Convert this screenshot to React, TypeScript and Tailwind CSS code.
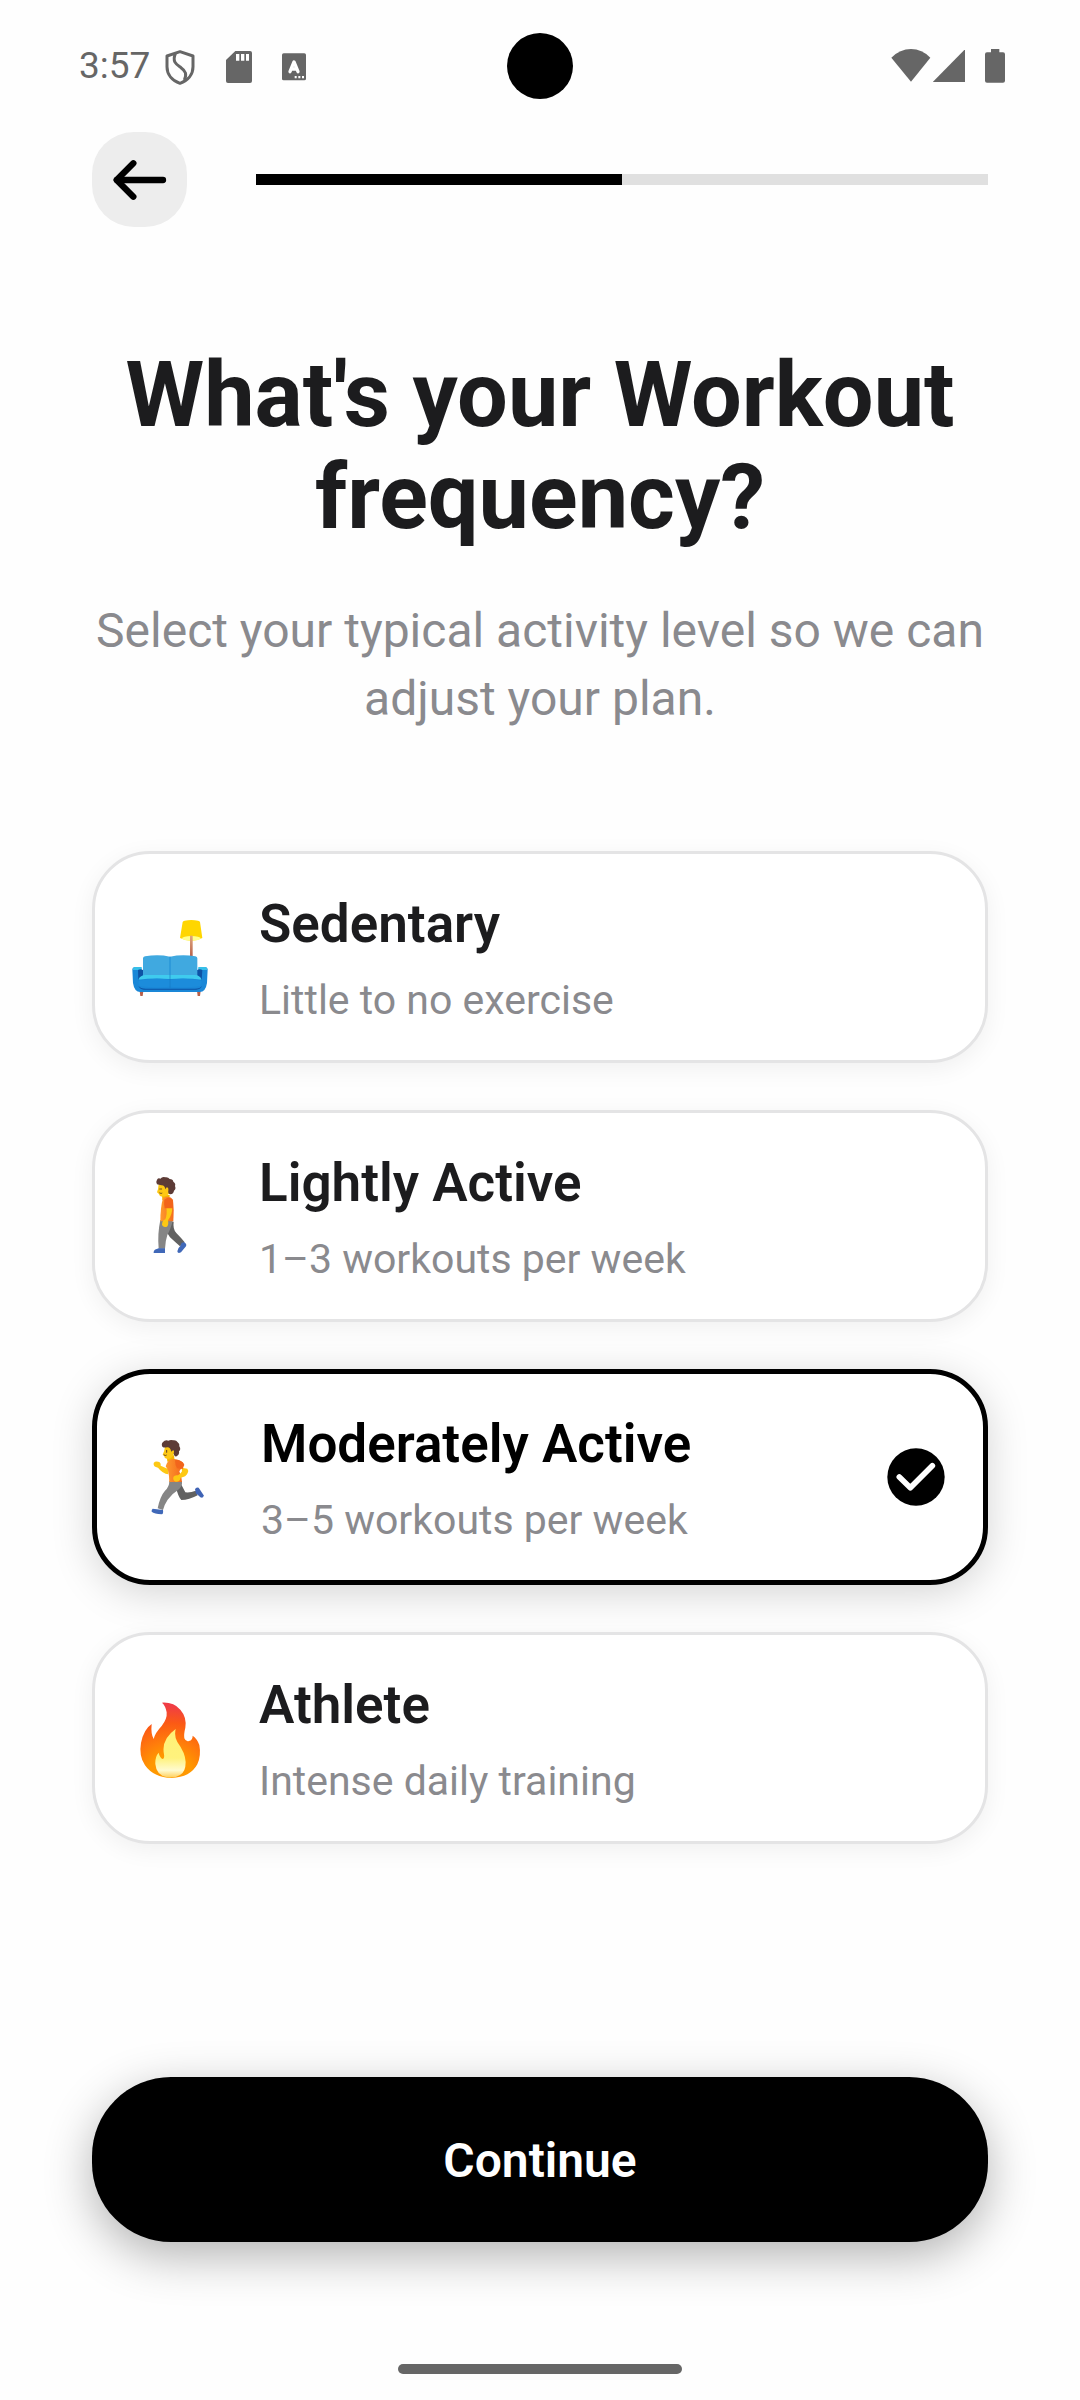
import { useState } from "react";
import type { ReactNode } from "react";

function ShieldIcon() {
  return (
    <svg className="h-11 w-8" viewBox="313 72 96 132" fill="none" stroke="#666" strokeWidth="9" strokeLinejoin="round" aria-hidden="true">
      <path d="M361 95 L400 108 V140 C400 164 384 182 361 190 C338 182 322 164 322 140 V108 Z" />
      <path d="M347 101 C337 126 350 133 364 143 C378 153 382 162 374 180" />
    </svg>
  );
}

function SdCardIcon() {
  return (
    <svg className="h-11 w-7" viewBox="492 72 84 132" aria-hidden="true">
      <path fill="#666" d="M523 93 H567 Q573 93 573 99 V183 Q573 189 567 189 H501 Q495 189 495 183 V120 Z" />
      <path fill="#fff" d="M525 102h10v20h-10zM540 102h10v20h-10zM555 102h9v20h-9z" />
    </svg>
  );
}

function LetterBoxIcon() {
  return (
    <svg className="h-11 w-6" viewBox="672 72 72 132" aria-hidden="true">
      <rect x="672" y="100" width="72" height="81" rx="5" fill="#666" />
      <path d="M696 155 L708 126 L720 155 M701 147 H715" fill="none" stroke="#fff" strokeWidth="10" strokeLinecap="round" strokeLinejoin="round" />
      <path fill="#fff" d="M710 168h6v7h-6zM721 168h6v7h-6zM732 168h6v7h-6z" />
    </svg>
  );
}

function WifiIcon() {
  return (
    <svg className="h-11 w-10" viewBox="92 72 120 132" aria-hidden="true">
      <path fill="#666" d="M93 113 Q119 87 152 87 Q185 87 210 113 L152 185 Z" />
    </svg>
  );
}

function SignalIcon() {
  return (
    <svg className="h-11 w-8" viewBox="221 72 96 132" aria-hidden="true">
      <path fill="#666" d="M318 87 V186 H220 Z" />
    </svg>
  );
}

function BatteryIcon() {
  return (
    <svg className="h-11 w-5" viewBox="375 72 60 132" aria-hidden="true">
      <path fill="#666" d="M393 87 H418 V97 H429 Q435 97 435 103 V182 Q435 188 429 188 H381 Q375 188 375 182 V103 Q375 97 381 97 H393 Z" />
    </svg>
  );
}

function CouchIcon() {
  return (
    <svg className="size-20 shrink-0" viewBox="48 48 240 240" aria-hidden="true">
      <defs>
        <linearGradient id="pole" x1="0" x2="0" y1="0" y2="1">
          <stop offset="0" stopColor="#dfa77e" />
          <stop offset="1" stopColor="#b8604a" />
        </linearGradient>
      </defs>
      <path d="M203 63 Q204 60 209 59 Q229 55 249 59 Q254 60 255 63 L262 111 Q229 128 195 111 Z" fill="#ffd600" />
      <ellipse cx="229" cy="112" rx="28" ry="7" fill="#ffff8d" />
      <rect x="225" y="104" width="8" height="64" fill="url(#pole)" />
      <path d="M74 270 h11 l-2 15 h-7 z M246 270 h11 l-2 15 h-7 z" fill="#b8604a" />
      <path d="M52 205 Q52 199 59 199 H78 L84 226 H246 L252 199 H271 Q278 199 278 205 L276 246 Q272 273 254 273 H76 Q58 273 54 246 Z" fill="#1a87d7" />
      <path d="M58 198 H80 V207 H54 Q53 200 58 198 M250 198 H272 Q278 200 276 207 H250 Z" fill="#37bfe9" />
      <path d="M69 207 Q76 203 84 207 V228 L70 238 Z M246 207 Q255 203 262 207 L260 238 L246 228 Z" fill="#0d52a5" />
      <path d="M84 172 Q84 167 90 166 Q130 159 165 167 Q202 159 241 166 Q247 167 247 172 V226 H84 Z" fill="#40a9e0" />
      <path d="M165 167 V226" stroke="#1c8cd4" strokeWidth="3" />
      <path d="M70 236 Q76 222 92 222 H240 Q254 222 260 236 Q215 230 165 234 Q114 230 70 236 Z" fill="#3fcbee" />
      <path d="M70 254 Q76 263 92 263 H240 Q256 263 261 254 Q258 264 244 266 H86 Q74 264 70 254 Z" fill="#0d52a5" />
      <path d="M71 239 Q118 230 165 236 Q214 230 259 239 Q262 250 254 256 Q210 262 165 257 Q118 262 76 256 Q68 250 71 239 Z" fill="#1c8cdb" />
      <path d="M165 222 V261" stroke="#1578c4" strokeWidth="2" />
    </svg>
  );
}

function WalkerIcon() {
  return (
    <svg className="size-20 shrink-0" viewBox="48 48 240 240" aria-hidden="true">
      <defs>
        <linearGradient id="walkShirt" x1="0" x2="1" y1="0" y2="0">
          <stop offset="0" stopColor="#ff9a2e" />
          <stop offset="1" stopColor="#f36c1c" />
        </linearGradient>
      </defs>
      <path d="M155 185 H176 Q173 207 184 219 Q198 233 209 247 L195 259 Q178 244 165 232 Q151 215 155 185 Z" fill="#616161" />
      <path d="M200 248 L208 247 Q216 252 213 259 L198 277 Q188 282 187 274 Q188 264 196 258 Z" fill="#4068b8" />
      <path d="M136 180 H174 Q166 210 157 225 Q151 243 150 266 H131 Q127 222 136 180 Z" fill="#858585" />
      <path d="M131 265 H150 V279 H116 Q115 271 123 268 Z" fill="#4068b8" />
      <path d="M141 105 H164 L163 120 H142 Z" fill="#f5b400" />
      <path d="M144 114 Q164 105 174 119 Q178 150 175 184 H136 Q136 142 144 114 Z" fill="url(#walkShirt)" />
      <path d="M154 141 H172 Q172 165 159 181 Q162 198 154 201 Q143 201 141 194 Q141 182 151 178 Q157 162 154 141 Z" fill="#fdc813" />
      <path d="M148 119 Q168 105 174 127 V145 H149 Q146 130 148 119 Z" fill="#f2641b" />
      <path d="M131 72 Q163 67 166 86 Q164 105 151 109 Q133 112 132 102 L126 97 Q130 88 131 72 Z" fill="#fdc813" />
      <path d="M126 73 Q121 67 126 59 Q130 53 136 56 Q142 49 151 52 Q160 51 164 57 Q174 57 175 65 Q183 70 180 78 Q184 87 177 92 Q176 101 166 103 Q158 101 160 92 Q161 82 155 82 L151 88 Q149 75 139 76 Z" fill="#5d3b36" />
      <path d="M134 87 h6 M134 99 q5 3 7 1" stroke="#79551c" strokeWidth="3" fill="none" strokeLinecap="round" />
    </svg>
  );
}

function RunnerIcon() {
  return (
    <svg className="size-20 shrink-0" viewBox="48 48 240 240" aria-hidden="true">
      <defs>
        <linearGradient id="runShirt" x1="0" x2="1" y1="0" y2="0">
          <stop offset="0" stopColor="#ff9a2e" />
          <stop offset="1" stopColor="#f2651c" />
        </linearGradient>
      </defs>
      <path d="M176 196 L190 185 L205 214 Q220 216 236 209 L242 223 Q216 237 193 237 Q184 230 176 196 Z" fill="#616161" />
      <path d="M234 205 Q237 197 245 200 L260 223 Q260 233 250 229 L237 217 Z" fill="#3f63b5" />
      <path d="M157 180 H195 Q197 196 183 207 Q164 219 152 236 Q143 249 138 267 L122 262 Q129 226 144 209 Q157 198 157 180 Z" fill="#858585" />
      <path d="M107 263 L138 267 Q140 279 134 280 Q112 278 104 272 Q103 266 107 263 Z" fill="#4068b8" />
      <path d="M110 126 Q115 119 127 123 Q133 128 131 134 L155 145 L154 160 Q137 158 123 140 Q108 138 110 126 Z" fill="#fdc813" />
      <path d="M149 103 H171 L173 119 L151 122 Z" fill="#f5b400" />
      <path d="M153 147 Q148 139 146 136 Q151 116 168 114 Q187 115 197 124 L201 130 L187 151 Q194 167 195 183 H157 Q157 165 153 147 Z" fill="url(#runShirt)" />
      <path d="M194 140 L211 143 Q216 149 212 156 Q207 168 191 170 Q189 183 176 182 Q167 179 169 168 Q173 161 183 163 Q192 158 195 151 Z" fill="#fdc813" />
      <path d="M174 118 Q190 114 202 131 L197 144 L180 142 Q174 132 174 118 Z" fill="#f2651c" />
      <path d="M144 77 Q169 70 173 91 Q168 112 155 114 Q142 114 142 106 L137 101 Q142 93 144 77 Z" fill="#fdc813" />
      <path d="M136 77 Q132 68 138 63 Q144 56 154 59 Q161 55 169 58 Q178 57 182 64 Q190 70 187 76 Q193 85 186 91 Q188 101 179 106 Q171 108 170 97 Q173 88 168 88 L163 92 Q159 77 150 79 Q141 81 136 77 Z" fill="#5d3b36" />
      <path d="M149 88 v6 M141 102 q5 3 7 1" stroke="#63431f" strokeWidth="3" fill="none" strokeLinecap="round" />
    </svg>
  );
}

function FlameIcon() {
  return (
    <svg className="size-20 shrink-0" viewBox="48 48 240 240" aria-hidden="true">
      <defs>
        <radialGradient id="flameOuter" gradientUnits="userSpaceOnUse" cx="166" cy="286" r="226">
          <stop offset="0.3" stopColor="#ff9800" />
          <stop offset="0.5" stopColor="#ff7a0c" />
          <stop offset="0.72" stopColor="#fb5a14" />
          <stop offset="0.95" stopColor="#f03d45" />
        </radialGradient>
        <linearGradient id="flameInner" x1="0" x2="0" y1="0" y2="1">
          <stop offset="0" stopColor="#fff176" />
          <stop offset="0.6" stopColor="#fff27d" />
          <stop offset="0.85" stopColor="#fffbd0" />
          <stop offset="1" stopColor="#ffcf5c" />
        </linearGradient>
      </defs>
      <path d="M141 62 Q176 60 196 83 Q216 106 211 137 Q206 157 208 169 Q212 180 222 177 Q233 174 233 161 Q247 171 253 189 Q259 221 247 247 Q226 286 170 288 Q116 287 90 250 Q71 222 78 183 Q86 142 110 126 Q107 155 116 171 Q120 153 140 132 Q157 111 155 91 Q152 72 141 62 Z" fill="url(#flameOuter)" />
      <path d="M182 141 Q177 163 187 180 Q211 213 212 240 Q212 270 195 279 Q180 289 156 286 Q124 280 121 246 Q120 224 131 212 Q134 227 143 231 Q149 230 147 217 Q138 172 182 141 Z" fill="url(#flameInner)" />
    </svg>
  );
}

function CheckBadge() {
  return (
    <svg className="mr-0.5 size-[58px] shrink-0" viewBox="263 292 174 174" aria-hidden="true">
      <circle cx="350" cy="379" r="86" fill="#000" />
      <path d="M300 379 L333 411 L399 345" fill="none" stroke="#fff" strokeWidth="17" strokeLinecap="round" strokeLinejoin="round" />
    </svg>
  );
}

type Level = { id: string; title: string; detail: string; icon: ReactNode };

const levels: Level[] = [
  { id: "sedentary", title: "Sedentary", detail: "Little to no exercise", icon: <CouchIcon /> },
  { id: "light", title: "Lightly Active", detail: "1–3 workouts per week", icon: <WalkerIcon /> },
  { id: "moderate", title: "Moderately Active", detail: "3–5 workouts per week", icon: <RunnerIcon /> },
  { id: "athlete", title: "Athlete", detail: "Intense daily training", icon: <FlameIcon /> },
];

function StatusBar() {
  return (
    <header className="relative flex h-[132px] items-center justify-between pr-[75px] pl-[79px]">
      <div className="flex items-center">
        <span className="text-[37px] leading-11 text-[#666]">3:57</span>
        <div className="ml-[14px] flex items-center gap-[29px]">
          <ShieldIcon />
          <SdCardIcon />
          <LetterBoxIcon />
        </div>
      </div>
      {/* camera cutout over the bar */}
      <div className="absolute inset-x-0 top-[33px] mx-auto size-[66px] rounded-full bg-black" />
      <div className="flex items-center">
        <WifiIcon />
        <span className="ml-0.5 flex items-center gap-5">
          <SignalIcon />
          <BatteryIcon />
        </span>
      </div>
    </header>
  );
}

function LevelCard({ level, selected, onSelect }: { level: Level; selected: boolean; onSelect: () => void }) {
  return (
    <label
      htmlFor={level.id}
      className={
        selected
          ? "flex cursor-pointer items-center rounded-[58px] border-5 border-black bg-white px-9 py-9 shadow-[0_8px_40px_rgba(0,0,0,0.17)]"
          : "flex cursor-pointer items-center rounded-[58px] border-3 border-[#e4e4e5] bg-white px-9 py-9 shadow-[0_6px_24px_rgba(0,0,0,0.06)]"
      }
    >
      <input id={level.id} type="radio" name="activity" className="sr-only" checked={selected} onChange={onSelect} />
      {level.icon}
      <span className="ml-12 flex flex-1 flex-col gap-5 pt-0.5">
        <span className={selected ? "text-[53px] leading-16 font-semibold text-black" : "text-[53px] leading-16 font-semibold text-[#1c1c1e]"}>
          {level.title}
        </span>
        <span className="text-[41px] leading-12 text-[#8a8a8e]">{level.detail}</span>
      </span>
      {selected && <CheckBadge />}
    </label>
  );
}

export default function App() {
  const [active, setActive] = useState("moderate");
  return (
    <div className="flex min-h-screen flex-col bg-[#fefefe] font-[Roboto,sans-serif]">
      <StatusBar />
      <main className="flex flex-1 flex-col px-[92px]">
        <div className="flex items-center gap-[69px]">
          <button type="button" aria-label="Back" className="flex size-[95px] items-center justify-center rounded-[42px] bg-[#ededed]">
            <svg className="size-14" viewBox="125 127 168 168" fill="none" stroke="#000" strokeLinecap="round" strokeLinejoin="round" aria-hidden="true">
              <path d="M278 211 H140" strokeWidth="19" />
              <path d="M189 161 L139 211 L189 261" strokeWidth="19" />
            </svg>
          </button>
          <div role="progressbar" aria-label="Setup progress" aria-valuenow={50} aria-valuemin={0} aria-valuemax={100} className="h-[11px] flex-1 bg-[#e0e0e0]">
            <div className="h-full w-1/2 bg-black" />
          </div>
        </div>
        <h1 className="mt-[118px] text-center text-[90px] leading-[102px] font-bold text-[#1c1c1e]">What's your Workout frequency?</h1>
        <p className="mt-12 text-center text-[48px] leading-[68px] text-[#8a8a8e]">Select your typical activity level so we can adjust your plan.</p>
        <div role="radiogroup" aria-label="Workout frequency" className="mt-[118px] flex flex-col gap-[47px]">
          {levels.map((level) => (
            <LevelCard key={level.id} level={level} selected={active === level.id} onSelect={() => setActive(level.id)} />
          ))}
        </div>
        <button type="button" className="mt-auto mb-[122px] h-[165px] w-full rounded-[79px] bg-black pt-0.5 text-[48px] font-semibold text-white shadow-[0_14px_48px_rgba(0,0,0,0.3)]">
          Continue
        </button>
      </main>
      <div className="mb-[26px] h-[10px] w-[284px] self-center rounded-full bg-[#666]" />
    </div>
  );
}
